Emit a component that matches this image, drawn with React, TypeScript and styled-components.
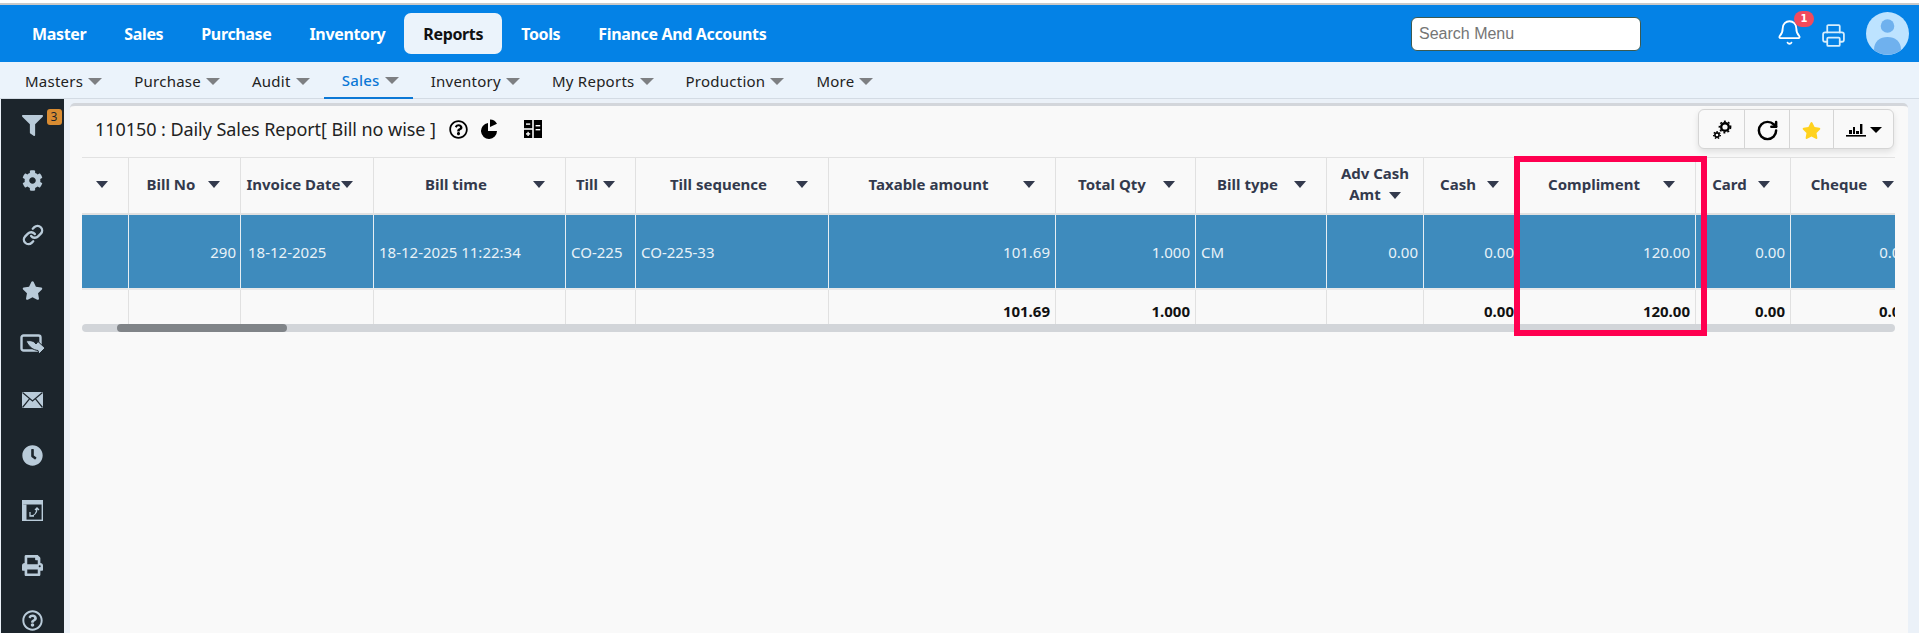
import React from "react";
import styled, { createGlobalStyle } from "styled-components";
import { Bell, Printer, RotateCw, Link as LinkIcon } from "lucide-react";
import { FaCog, FaStar, FaClock, FaPrint, FaRegQuestionCircle, FaFilter } from "react-icons/fa";

const Global = createGlobalStyle`
  html, body { margin: 0; padding: 0; background: #fff; }
  body { font-family: "Noto Sans", "Open Sans", sans-serif; overflow: hidden; }
`;

const Page = styled.div`
  display: flex;
  flex-direction: column;
  width: 1919px;
  height: 633px;
  overflow: hidden;
`;
const TopEdge = styled.div`
  height: 3px;
  background: #fff;
  border-bottom: 2px solid #c9c9c9;
  flex: none;
`;
const TopBar = styled.header`
  flex: none;
  display: flex;
  align-items: center;
  height: 57px;
  padding: 0 10px 0 13px;
  background: #0482e6;
`;
const MainLink = styled.a<{ $active?: boolean }>`
  display: flex;
  align-items: center;
  height: 41px;
  padding: 0 19px;
  border-radius: 7px;
  font-size: 16px;
  font-weight: 700;
  letter-spacing: -0.35px;
  color: ${(p) => (p.$active ? "#111" : "#fff")};
  background: ${(p) => (p.$active ? "#ebf3fb" : "transparent")};
`;
const SearchBox = styled.input`
  box-sizing: border-box;
  width: 230px;
  height: 34px;
  margin-left: auto;
  margin-right: 135px;
  padding: 0 7px;
  border: 1px solid #3b5a52;
  border-radius: 6px;
  background: #fff;
  font-family: "Liberation Sans", sans-serif;
  font-size: 16px;
  &::placeholder { color: #757575; opacity: 1; }
`;
const BellWrap = styled.div`
  position: relative;
  display: flex;
  width: 27px;
  height: 27px;
  margin: -3px 18px 0 0;
  color: #fff;
`;
const BellBadge = styled.span`
  position: absolute;
  top: -8px;
  left: 18px;
  width: 20px;
  height: 16px;
  border-radius: 8px;
  background: #f24a5c;
  color: #fff;
  font-family: "DejaVu Sans", sans-serif;
  font-size: 10px;
  font-weight: 700;
  line-height: 16px;
  text-align: center;
`;
const PrintWrap = styled.div`
  display: flex;
  margin: 3px 20px 0 0;
  color: #d8eefc;
`;
const Avatar = styled.svg`
  width: 43px;
  height: 43px;
  flex: none;
`;

const SubBar = styled.nav`
  flex: none;
  box-sizing: border-box;
  display: flex;
  height: 37px;
  padding-left: 7px;
  background: #ebf3fb;
  border-bottom: 1px solid #d3dbe4;
`;
const SubLink = styled.a<{ $active?: boolean }>`
  display: flex;
  align-items: center;
  gap: 5px;
  height: 37px;
  box-sizing: border-box;
  padding: 0 14px 0 18px;
  font-size: 15px;
  letter-spacing: 0.25px;
  color: ${(p) => (p.$active ? "#0b78d6" : "#222")};
  font-weight: ${(p) => (p.$active ? 500 : 400)};
  border-bottom: ${(p) => (p.$active ? "2px solid #0b78d6" : "none")};
`;
const SubCaret = styled.i`
  width: 0;
  height: 0;
  margin-top: 2px;
  border-left: 7px solid transparent;
  border-right: 7px solid transparent;
  border-top: 7px solid #7d7f82;
`;

const Body = styled.div`
  flex: 1;
  display: flex;
  min-height: 0;
  background: #ebf1f8;
`;
const Side = styled.aside`
  flex: none;
  display: flex;
  flex-direction: column;
  align-items: center;
  gap: 35px;
  width: 63px;
  margin-left: 1px;
  padding-top: 16px;
  background: #1c252c;
  color: #b9cbd9;
`;
const SideItem = styled.div`
  position: relative;
  flex: none;
  display: flex;
  align-items: center;
  justify-content: center;
  width: 22px;
  height: 20px;
  font-size: 21px;
  & > svg { flex: none; }
`;
const CountBadge = styled.span`
  position: absolute;
  top: -6px;
  left: 25px;
  width: 15px;
  height: 16px;
  border-radius: 3px;
  background: #d98c32;
  color: #1c252c;
  font-size: 12px;
  line-height: 16px;
  text-align: center;
`;
const Card = styled.main`
  flex: none;
  box-sizing: border-box;
  width: 1838px;
  margin: 4px 0 0 6px;
  padding: 0 13px 0 12px;
  background: #f9f9f9;
  border-top: 3px solid #d3d6db;
  border-radius: 5px 5px 0 0;
`;
const CardHead = styled.div`
  display: flex;
  height: 52px;
  box-sizing: border-box;
  padding: 3px 1px 0 13px;
  border-bottom: 1px solid #e2e2e2;
`;
const Title = styled.h1`
  display: flex;
  align-items: center;
  margin: 0;
  height: 40px;
  font-size: 18px;
  font-weight: 400;
  letter-spacing: -0.06px;
  color: #222;
`;
const TitleIcon = styled.span<{ $gap: number }>`
  display: flex;
  margin-left: ${(p) => p.$gap}px;
  color: #000;
`;
const Tools = styled.div`
  display: flex;
  margin-left: auto;
  height: 40px;
  box-sizing: border-box;
  border: 1px solid #d5d5d5;
  border-radius: 6px;
  background: #f9f9f9;
  box-shadow: 0 3px 6px rgba(0, 0, 0, 0.1);
`;
const ToolCell = styled.div<{ $w: number }>`
  box-sizing: border-box;
  display: flex;
  align-items: center;
  justify-content: center;
  gap: 4px;
  width: ${(p) => p.$w}px;
  padding-top: 2px;
  color: #000;
  &:not(:last-child) { border-right: 1px solid #d5d5d5; }
`;
const ToolCaret = styled.i`
  width: 0;
  height: 0;
  border-left: 6px solid transparent;
  border-right: 6px solid transparent;
  border-top: 6px solid #000;
`;

const TableArea = styled.div`
  position: relative;
  width: 1813px;
`;
const TableClip = styled.div`
  width: 1813px;
  overflow: hidden;
`;
const Grid = styled.table`
  border-collapse: separate;
  border-spacing: 0;
  table-layout: fixed;
  width: 1833px;
  font-size: 15px;
`;
const HeadCell = styled.th`
  box-sizing: border-box;
  height: 57px;
  padding: 0 0 3px;
  border-right: 1px solid #e1e1e1;
  border-bottom: 2px solid #e1e1e1;
  color: #333a4d;
  font-weight: 700;
  font-size: 15px;
  line-height: 21px;
`;
const HeadInner = styled.div`
  display: flex;
  align-items: center;
  padding: 0 20px 0 5px;
`;
const HeadLabel = styled.span`
  flex: 1;
  text-align: center;
  white-space: nowrap;
`;
const WrapLabel = styled.div`
  text-align: center;
`;
const HeadCaret = styled.i<{ $inline?: boolean }>`
  display: ${(p) => (p.$inline ? "inline-block" : "block")};
  flex: none;
  width: 0;
  height: 0;
  margin-left: ${(p) => (p.$inline ? 8 : 0)}px;
  vertical-align: middle;
  border-left: 6px solid transparent;
  border-right: 6px solid transparent;
  border-top: 7px solid #333a4d;
`;
const DataCell = styled.td<{ $right?: boolean; $inset: number }>`
  box-sizing: border-box;
  height: 75px;
  padding: ${(p) => (p.$right ? `0 ${p.$inset}px 0 0` : `0 0 0 ${p.$inset}px`)};
  background: #3e8bbd;
  color: #e8f2f8;
  text-align: ${(p) => (p.$right ? "right" : "left")};
  white-space: nowrap;
  overflow: hidden;
  border-right: 1px solid #e6eef3;
  border-bottom: 2px solid #e9e9e9;
`;
const TotalCell = styled.td`
  box-sizing: border-box;
  height: 34px;
  padding: 7px 5px 0;
  color: #111;
  font-weight: 700;
  text-align: right;
  white-space: nowrap;
  overflow: hidden;
  border-right: 1px solid #e1e1e1;
`;
const Track = styled.div`
  height: 8px;
  border-radius: 4px;
  background: #d2d5d9;
  display: flex;
`;
const Thumb = styled.div`
  width: 170px;
  margin-left: 35px;
  height: 8px;
  border-radius: 4px;
  background: #808488;
`;
const Highlight = styled.div`
  position: absolute;
  top: -2px;
  left: 1432px;
  width: 193px;
  height: 180px;
  box-sizing: border-box;
  border: 6px solid #ff0050;
  pointer-events: none;
`;

const GearPair = () => (
  <svg width="22" height="22" viewBox="0 0 22 22">
    <g fill="none" stroke="#000">
      <circle cx="14" cy="8" r="3.8" strokeWidth="2.4" />
      <circle cx="14" cy="8" r="5.6" strokeWidth="1.6" strokeDasharray="2 2.1" />
      <circle cx="6" cy="16" r="2.1" strokeWidth="1.6" />
      <circle cx="6" cy="16" r="3.4" strokeWidth="1.3" strokeDasharray="1.4 1.6" />
    </g>
  </svg>
);
const BarChart = () => (
  <svg width="20" height="14" viewBox="0 0 20 14" fill="#000">
    <rect x="0" y="12" width="20" height="1.6" />
    <rect x="3" y="7" width="3" height="4" />
    <rect x="7" y="4" width="2" height="7" />
    <rect x="10" y="8" width="3" height="3" />
    <rect x="14" y="1" width="2.4" height="10" />
  </svg>
);
const PieIcon = () => (
  <svg width="19" height="20" viewBox="0 0 19 20" fill="#000">
    <path d="M8 4 A8 8 0 1 0 17 12 L8 12 Z" />
    <path d="M10 0.5 L10 8 L17 4.8 A8 8 0 0 0 10 0.5 Z" />
  </svg>
);
const CalcIcon = () => (
  <svg width="18" height="18" viewBox="0 0 18 18">
    <rect x="0" y="0" width="8.2" height="8.2" fill="#000" />
    <rect x="9.8" y="0" width="8.2" height="18" fill="#000" />
    <rect x="0" y="9.8" width="8.2" height="8.2" fill="#000" />
    <rect x="2" y="3.4" width="4.2" height="1.4" fill="#fff" />
    <rect x="11.6" y="5" width="4.6" height="1.4" fill="#fff" />
    <rect x="11.6" y="9" width="4.6" height="1.4" fill="#fff" />
    <rect x="2" y="13.2" width="4.2" height="1.4" fill="#fff" />
    <rect x="3.4" y="11.8" width="1.4" height="4.2" fill="#fff" />
  </svg>
);
const ShareBox = () => (
  <svg width="26" height="22" viewBox="0 0 26 22">
    <rect x="1.5" y="1.5" width="19" height="15" rx="2" fill="none" stroke="#b9cbd9" strokeWidth="2.4" />
    <path d="M6 7 C11 6 14 7 16 10 L18 7.5 L25 14 L19 20 L18 16.5 C13 16 9 13 6 7 Z" fill="#b9cbd9" stroke="#1c252c" strokeWidth="1" />
  </svg>
);
const Envelope = () => (
  <svg width="21" height="16" viewBox="0 0 21 16">
    <rect x="0" y="0" width="21" height="16" fill="#b9cbd9" />
    <path d="M0.5 0.5 L10.5 9 L20.5 0.5 M0.5 15.5 L7.5 6.8 M20.5 15.5 L13.5 6.8" fill="none" stroke="#1c252c" strokeWidth="1.2" />
  </svg>
);
const WindowSwap = () => (
  <svg width="21" height="21" viewBox="0 0 21 21" fill="none" stroke="#b9cbd9">
    <rect x="0.7" y="0.7" width="19.6" height="19.6" strokeWidth="1.4" />
    <rect x="1" y="1" width="19" height="3.5" fill="#b9cbd9" stroke="none" />
    <rect x="1" y="4.5" width="3.5" height="15.5" fill="#b9cbd9" stroke="none" />
    <path d="M8 12 V16 H12 M8 16 C12 16 15 13 15 8 M13 10 L15 8 L17 10" strokeWidth="1.3" />
  </svg>
);
const Person = () => (
  <Avatar viewBox="0 0 43 43">
    <circle cx="21.5" cy="21.5" r="21.5" fill="#bde3ff" />
    <circle cx="21.5" cy="14" r="6.8" fill="#6fb1ee" />
    <path d="M8 38 C8 29 14 25 21.5 25 C29 25 35 29 35 38 A21.5 21.5 0 0 1 8 38 Z" fill="#6fb1ee" />
  </Avatar>
);

type Col = { w: number; label: string; row: string; right?: boolean; total?: string; wrap?: boolean; inset?: number };
const cols: Col[] = [
  { w: 47, label: "", row: "" },
  { w: 112, label: "Bill No", row: "290", right: true, inset: 4 },
  { w: 133, label: "Invoice Date", row: "18-12-2025", inset: 7 },
  { w: 192, label: "Bill time", row: "18-12-2025 11:22:34" },
  { w: 70, label: "Till", row: "CO-225" },
  { w: 193, label: "Till sequence", row: "CO-225-33" },
  { w: 227, label: "Taxable amount", row: "101.69", right: true, total: "101.69" },
  { w: 140, label: "Total Qty", row: "1.000", right: true, total: "1.000" },
  { w: 131, label: "Bill type", row: "CM" },
  { w: 97, label: "Adv Cash Amt", row: "0.00", right: true, wrap: true },
  { w: 96, label: "Cash", row: "0.00", right: true, total: "0.00" },
  { w: 176, label: "Compliment", row: "120.00", right: true, total: "120.00" },
  { w: 95, label: "Card", row: "0.00", right: true, total: "0.00" },
  { w: 124, label: "Cheque", row: "0.00", right: true, total: "0.00" },
];

const mainMenu = ["Master", "Sales", "Purchase", "Inventory", "Reports", "Tools", "Finance And Accounts"];
const subMenu = ["Masters", "Purchase", "Audit", "Sales", "Inventory", "My Reports", "Production", "More"];

export default function App() {
  return (
    <Page>
      <Global />
      <TopEdge />
      <TopBar>
        {mainMenu.map((m) => (
          <MainLink key={m} $active={m === "Reports"}>{m}</MainLink>
        ))}
        <SearchBox placeholder="Search Menu" />
        <BellWrap>
          <Bell size={27} strokeWidth={1.6} />
          <BellBadge>1</BellBadge>
        </BellWrap>
        <PrintWrap>
          <Printer size={25} strokeWidth={1.7} />
        </PrintWrap>
        <Person />
      </TopBar>
      <SubBar>
        {subMenu.map((m) => (
          <SubLink key={m} $active={m === "Sales"}>
            {m}
            <SubCaret />
          </SubLink>
        ))}
      </SubBar>
      <Body>
        <Side>
          <SideItem>
            <FaFilter />
            <CountBadge>3</CountBadge>
          </SideItem>
          <SideItem><FaCog /></SideItem>
          <SideItem><LinkIcon size={22} strokeWidth={2.6} /></SideItem>
          <SideItem><FaStar /></SideItem>
          <SideItem><ShareBox /></SideItem>
          <SideItem><Envelope /></SideItem>
          <SideItem><FaClock /></SideItem>
          <SideItem><WindowSwap /></SideItem>
          <SideItem><FaPrint /></SideItem>
          <SideItem><FaRegQuestionCircle /></SideItem>
        </Side>
        <Card>
          <CardHead>
            <Title>
              110150 : Daily Sales Report[ Bill no wise ]
              <TitleIcon $gap={13}><FaRegQuestionCircle size={19} /></TitleIcon>
              <TitleIcon $gap={12}><PieIcon /></TitleIcon>
              <TitleIcon $gap={25}><CalcIcon /></TitleIcon>
            </Title>
            <Tools>
              <ToolCell $w={46}><GearPair /></ToolCell>
              <ToolCell $w={45}><RotateCw size={23} strokeWidth={2.6} /></ToolCell>
              <ToolCell $w={44}><FaStar size={19} color="#ffd21f" /></ToolCell>
              <ToolCell $w={59}><BarChart /><ToolCaret /></ToolCell>
            </Tools>
          </CardHead>
          <TableArea>
            <TableClip>
              <Grid>
                <colgroup>
                  {cols.map((c, i) => <col key={i} width={c.w} />)}
                </colgroup>
                <thead>
                  <tr>
                    {cols.map((c, i) => (
                      <HeadCell key={i}>
                        {c.wrap ? (
                          <WrapLabel>Adv Cash<br />Amt<HeadCaret $inline /></WrapLabel>
                        ) : (
                          <HeadInner>
                            <HeadLabel>{c.label}</HeadLabel>
                            <HeadCaret />
                          </HeadInner>
                        )}
                      </HeadCell>
                    ))}
                  </tr>
                </thead>
                <tbody>
                  <tr>
                    {cols.map((c, i) => (
                      <DataCell key={i} $right={c.right} $inset={c.inset ?? 5}>{c.row}</DataCell>
                    ))}
                  </tr>
                  <tr>
                    {cols.map((c, i) => <TotalCell key={i}>{c.total ?? ""}</TotalCell>)}
                  </tr>
                </tbody>
              </Grid>
            </TableClip>
            <Track><Thumb /></Track>
            <Highlight />
          </TableArea>
        </Card>
      </Body>
    </Page>
  );
}
